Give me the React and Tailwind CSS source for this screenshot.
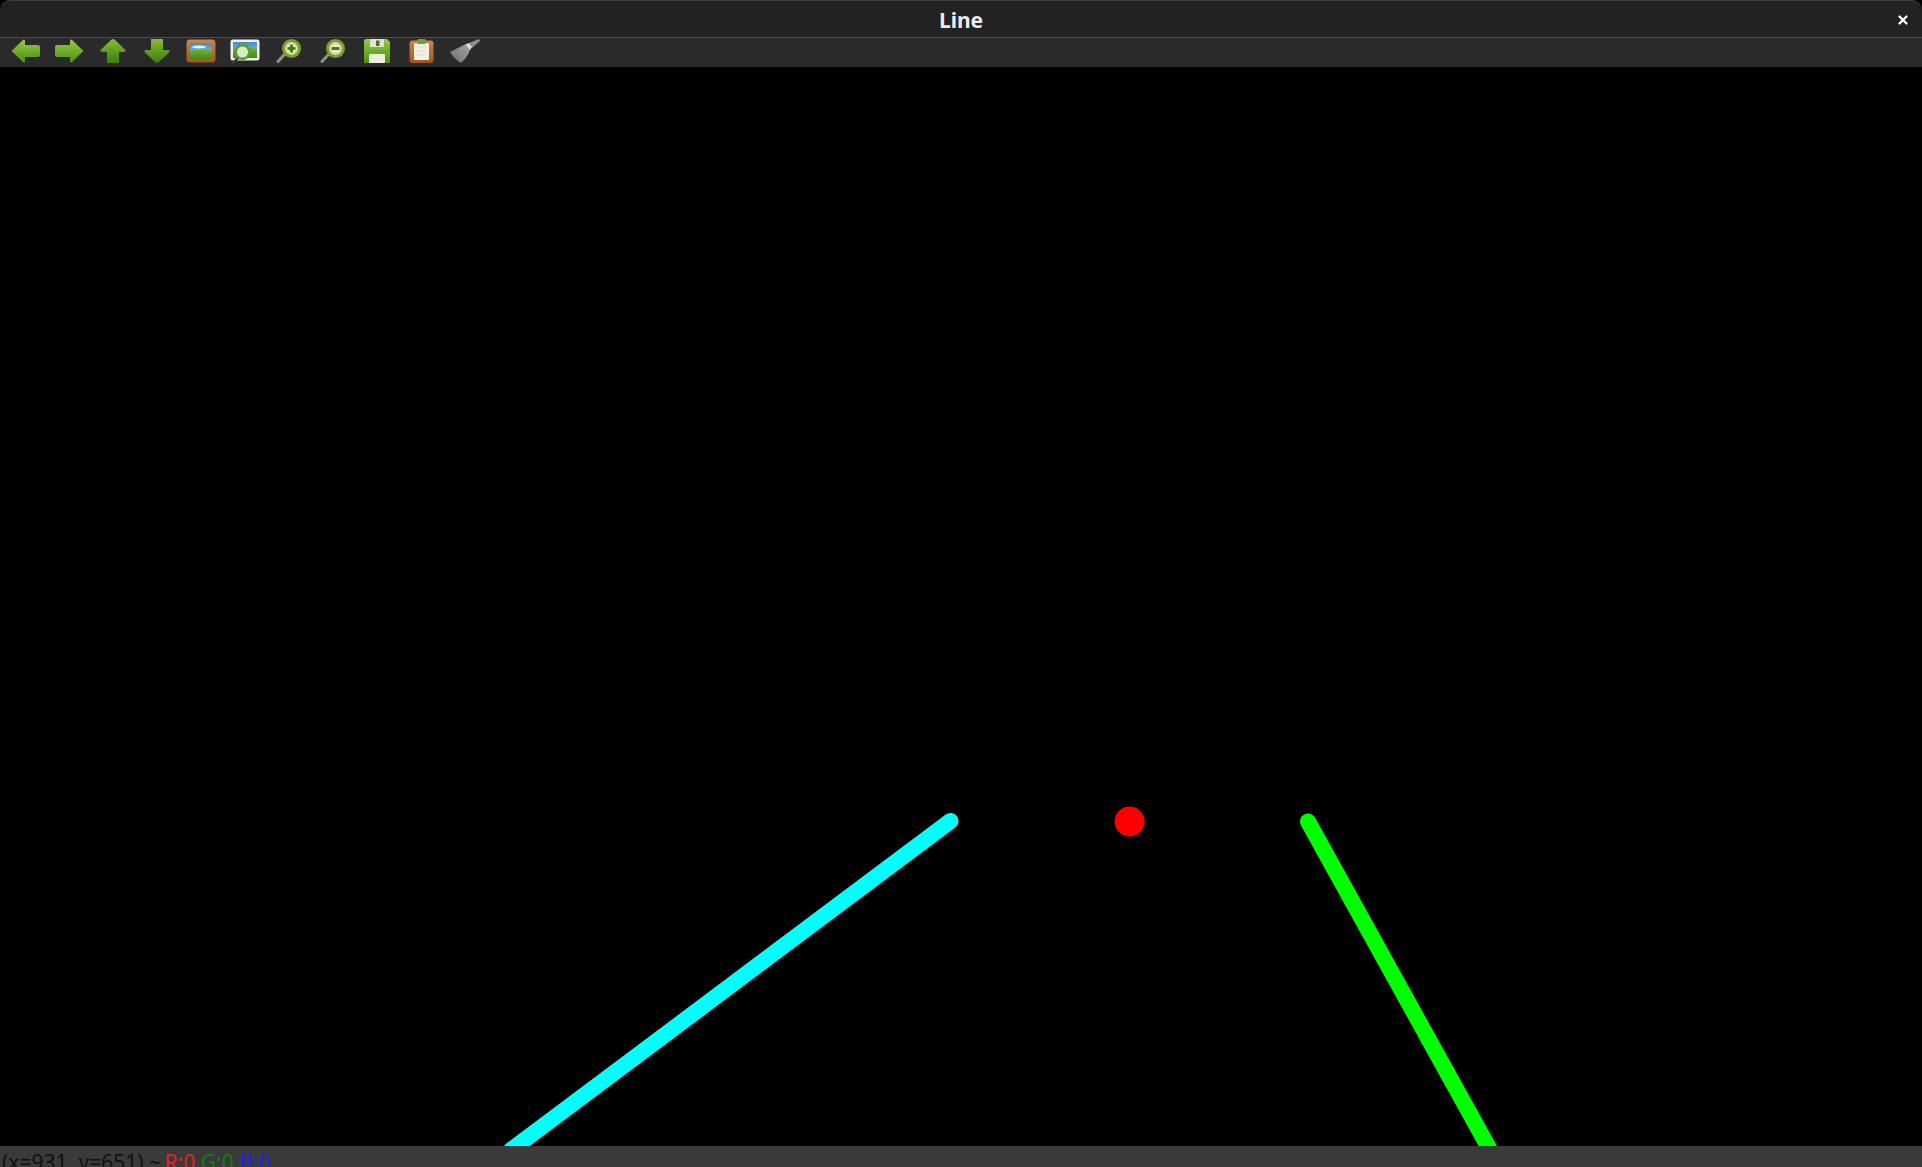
import { X } from 'lucide-react';

// shared gradients for the toolbar icons
function IconDefs() {
    return (
        <svg width="0" height="0" className="absolute">
            <defs>
                <linearGradient id="green" x1="0" y1="0" x2="0" y2="1">
                    <stop offset="0" stopColor="#93cb45" />
                    <stop offset="1" stopColor="#4f8f14" />
                </linearGradient>
                <linearGradient id="greenDark" x1="0" y1="0" x2="0" y2="1">
                    <stop offset="0" stopColor="#84bd38" />
                    <stop offset="1" stopColor="#3f7d0c" />
                </linearGradient>
                <linearGradient id="orange" x1="0" y1="0" x2="0" y2="1">
                    <stop offset="0" stopColor="#cf824a" />
                    <stop offset="1" stopColor="#a4551c" />
                </linearGradient>
                <linearGradient id="sky" x1="0" y1="0" x2="0" y2="1">
                    <stop offset="0" stopColor="#3f8ec9" />
                    <stop offset="1" stopColor="#a8d3ee" />
                </linearGradient>
                <linearGradient id="grass" x1="0" y1="0" x2="0" y2="1">
                    <stop offset="0" stopColor="#76b52d" />
                    <stop offset="1" stopColor="#3f8a1c" />
                </linearGradient>
                <linearGradient id="gray" x1="1" y1="0" x2="0" y2="1">
                    <stop offset="0" stopColor="#a5a5a5" />
                    <stop offset="1" stopColor="#6d6d6d" />
                </linearGradient>
            </defs>
        </svg>
    );
}

function ArrowLeft({ flip }) {
    return (
        <svg width="29" height="24" viewBox="0 0 29 24" style={flip ? { transform: 'scaleX(-1)' } : undefined}>
            <path d="M0.5 12 L12.5 0.5 Q14 0 14 2 L14 6 L27 6 Q29 6 29 8 L29 16 Q29 18 27 18 L14 18 L14 22 Q14 24 12.5 23.5 Z" fill="url(#green)" />
        </svg>
    );
}

function ArrowUp() {
    return (
        <svg width="26" height="24" viewBox="0 0 26 24">
            <path d="M13 0 Q14 0 15 1 L25.5 11 Q26 13 24 13 L19 13 L19 24 L7 24 L7 13 L2 13 Q0 13 0.5 11 L11 1 Q12 0 13 0 Z" fill="url(#greenDark)" />
        </svg>
    );
}

function ArrowDown() {
    return (
        <svg width="26" height="24" viewBox="0 0 26 24">
            <path d="M7 0 L19 0 L19 11 L24 11 Q26 11 25.5 13 L15 23 Q13 24.5 11 23 L0.5 13 Q0 11 2 11 L7 11 Z" fill="url(#greenDark)" />
        </svg>
    );
}

function PictureFramed() {
    return (
        <svg width="30" height="24" viewBox="0 0 30 24">
            <rect x="0.5" y="0.5" width="29" height="23" rx="3.5" fill="url(#orange)" />
            <rect x="4" y="4" width="22" height="16" rx="1" fill="url(#sky)" />
            <path d="M4 12 Q15 8 26 12 L26 20 L4 20 Z" fill="url(#grass)" />
            <ellipse cx="13" cy="8" rx="7" ry="1.4" fill="#e8f2fa" />
        </svg>
    );
}

function PictureZoom() {
    return (
        <svg width="30" height="24" viewBox="0 0 30 24">
            <rect x="0.5" y="0.5" width="29" height="21" rx="2.5" fill="#eef1f0" />
            <rect x="3" y="3" width="24" height="16" fill="url(#sky)" />
            <path d="M3 10 Q15 6 27 10 L27 19 L3 19 Z" fill="url(#grass)" />
            <path d="M8 19 L3 24" stroke="#3c3c3c" strokeWidth="2.5" strokeLinecap="round" />
            <circle cx="12.5" cy="13" r="8" fill="#5f9c24" />
            <circle cx="12.5" cy="13" r="5.5" fill="#d9ebc4" />
        </svg>
    );
}

function ZoomGlass({ plus }) {
    return (
        <svg width="26" height="24" viewBox="0 0 26 24">
            <path d="M8 16 L2 22.5" stroke="#8f9389" strokeWidth="3" strokeLinecap="round" />
            <circle cx="15.5" cy="9.5" r="9.5" fill="#7c9f2e" />
            <circle cx="15.5" cy="9.5" r="6.5" fill="#cfe0a8" />
            <circle cx="15.5" cy="9.5" r="4" fill="#e9f2d8" />
            <rect x="11.5" y="8" width="8" height="3" rx="1" fill="#4a7a12" />
            {plus && <rect x="14" y="5.5" width="3" height="8" rx="1" fill="#4a7a12" />}
        </svg>
    );
}

function Floppy() {
    return (
        <svg width="26" height="24" viewBox="0 0 26 24">
            <path d="M2 0 L23 0 L26 3 L26 24 L0 24 L0 2 Q0 0 2 0 Z" fill="url(#green)" />
            <rect x="6" y="0" width="14" height="8" rx="1" fill="#dfe5d0" />
            <rect x="12" y="1.5" width="3.5" height="5.5" fill="#55701f" />
            <rect x="5" y="15" width="16" height="9" rx="1" fill="#eceee2" />
        </svg>
    );
}

function Clipboard() {
    return (
        <svg width="25" height="24" viewBox="0 0 25 24">
            <rect x="0.5" y="1.5" width="24" height="22.5" rx="3" fill="url(#orange)" />
            <rect x="5" y="4" width="15" height="17" rx="1" fill="#f3f1e6" />
            <path d="M8 8 H17 M8 12 H17 M8 16 H17" stroke="#dedbcc" strokeWidth="1" />
            <rect x="8" y="0" width="9" height="5" rx="1.5" fill="#6aa82a" />
        </svg>
    );
}

function Broom() {
    return (
        <svg width="30" height="24" viewBox="0 0 30 24">
            <path d="M0 13 L15 5.5 L20 11 Q17 19 11 24 Q4 20 0 13 Z" fill="url(#gray)" />
            <path d="M19 4 L29 0 L30 2 L22 9 Z" fill="#8c8c8c" />
            <path d="M15 5.5 L19 4 L22 8 L20 11 Z" fill="#dcdcdc" />
        </svg>
    );
}

const tools = [
    <ArrowLeft />,
    <ArrowLeft flip />,
    <ArrowUp />,
    <ArrowDown />,
    <PictureFramed />,
    <PictureZoom />,
    <ZoomGlass plus />,
    <ZoomGlass />,
    <Floppy />,
    <Clipboard />,
    <Broom />,
];

export default function App() {
    return (
        <div className="w-[1922px] h-[1167px] flex flex-col bg-black overflow-hidden" style={{ fontFamily: '"Noto Sans", "Liberation Sans", sans-serif' }}>
            <IconDefs />
            <div className="h-[37px] shrink-0 flex items-center justify-center relative bg-[#222222] border-t border-[#3f3f3f] rounded-t-[10px]">
                <span className="text-[#ebebeb] text-[21px] font-bold mt-[4px]">Line</span>
                <X className="absolute right-[12px] top-[12px] text-white" size={14} strokeWidth={4} />
            </div>

            <div className="h-[30px] shrink-0 flex items-center pl-[3px] pb-[3px] bg-[#2a2a2a] border-t border-[#4d4d4d]">
                {tools.map((icon, i) => (
                    <div key={i} className="w-[44px] flex justify-center">{icon}</div>
                ))}
            </div>

            <div className="flex-1 relative">
                <svg className="absolute inset-0" width="1922" height="1080" viewBox="0 67 1922 1080">
                    <line x1="950.5" y1="821" x2="511" y2="1150" stroke="#00ffff" strokeWidth="16" strokeLinecap="round" />
                    <line x1="1308" y1="821.5" x2="1490" y2="1150" stroke="#00ff00" strokeWidth="16" strokeLinecap="round" />
                    <circle cx="1129.5" cy="821.5" r="15" fill="#ff0000" />
                </svg>
            </div>

            <div className="h-[21px] shrink-0 relative z-10 overflow-hidden bg-[#3a3a3a] pl-[2px] whitespace-nowrap text-[21px] leading-[24px] pt-[4px]">
                <span className="text-[#111111] mr-[-2px]">(x=931, y=651) ~ </span>
                <span className="text-[#e82020]">R:0 </span>
                <span className="text-[#0f7f0f]">G:0 </span>
                <span className="text-[#2020e8]">B:0</span>
            </div>
        </div>
    );
}
